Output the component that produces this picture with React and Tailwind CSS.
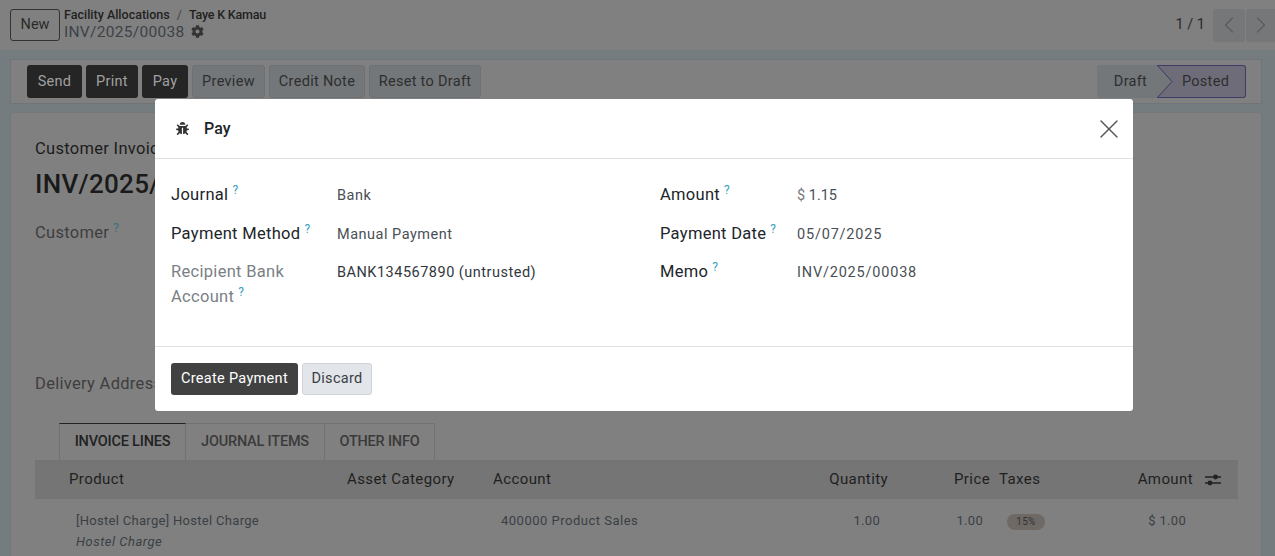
import React from "react";
import { X, ChevronLeft, ChevronRight } from "lucide-react";
import { FaCog, FaBug } from "react-icons/fa";

const Help = ({ className = "" }) => (
  <sup className={"ml-[4px] text-[12px] leading-none text-[#3a9fc0] " + className}>?</sup>
);

const Dark = ({ children, w }) => (
  <button className={"h-[33px] rounded-[3px] bg-[#252525] text-[14.5px] tracking-[0.3px] text-[#a0a0a0] " + w}>{children}</button>
);
const Light = ({ children, w }) => (
  <button className={"h-[33px] rounded-[3px] border border-[#6d7173] bg-[#73777a] text-[14.5px] tracking-[0.3px] text-[#2e2e2e] " + w}>{children}</button>
);

const Field = ({ label, children, muted, h = "h-[39px]", w = "w-[166px]" }) => (
  <div className={"flex items-start " + h}>
    <div className={"shrink-0 text-[16.5px] leading-[25px] tracking-[0.3px] " + w + " " + (muted ? "text-[#7a7f85]" : "text-[#212529]")}>{label}</div>
    <div className="pt-[1px] text-[14.5px] leading-[25px] tracking-[0.5px] text-[#4a4f55]">{children}</div>
  </div>
);

export default function App() {
  return (
    <div className="relative h-[556px] w-[1275px] overflow-hidden bg-[#747c80] font-['Roboto',sans-serif]">
      <header className="flex h-[51px] items-center border-b border-[#767a7c] bg-[#808080] pl-[10px] pr-0">
        <button className="h-[32px] w-[50px] rounded-[3px] border border-[#333] text-[14.5px] text-[#2a2a2a]">New</button>
        <div className="-mt-[2px] ml-[4px] flex flex-col">
          <div className="flex text-[12.5px] font-medium leading-[15px] text-[#222]">
            <span>Facility Allocations</span>
            <span className="mx-[7px] font-normal text-[#444]">/</span>
            <span className="tracking-[-0.2px]">Taye K Kamau</span>
          </div>
          <div className="flex items-center gap-[6px] text-[15.5px] leading-[20px] tracking-[0.3px] text-[#3c4248]">
            INV/2025/00038
            <FaCog size={13} className="text-[#333]" />
          </div>
        </div>
        <div className="ml-auto flex items-center">
          <span className="mr-[8px] text-[14.5px] text-[#2a2a2a]">1 / 1</span>
          <div className="flex h-[33px] w-[32px] items-center justify-center rounded-[3px] bg-[#757779]"><ChevronLeft size={28} strokeWidth={1} className="text-[#5c5c5c]" /></div>
          <div className="ml-[1px] flex h-[33px] w-[29px] items-center justify-center rounded-l-[3px] bg-[#757779]"><ChevronRight size={28} strokeWidth={1} className="text-[#5c5c5c]" /></div>
        </div>
      </header>

      <div className="mx-[10px] mt-[8px] flex h-[45px] w-[1252px] items-center border border-[#6f7579] bg-[#808080] pl-[16px] pr-[15px]">
        <div className="flex gap-[4px]">
          <Dark w="w-[55px]">Send</Dark>
          <Dark w="w-[52px]">Print</Dark>
          <Dark w="w-[46px]">Pay</Dark>
          <Light w="w-[73px]">Preview</Light>
          <Light w="w-[96px]">Credit Note</Light>
          <Light w="w-[112px]">Reset to Draft</Light>
        </div>
        <div className="relative ml-auto flex h-[33px] w-[149px] text-[14.5px] tracking-[0.3px] text-[#2e2e2e]">
          <div className="flex w-[61px] items-center justify-center rounded-l-[3px] bg-[#73777a] pl-[6px]">Draft</div>
          <div className="flex w-[88px] items-center justify-center rounded-r-[3px] border border-l-0 border-[#3f3a66] bg-[#6e6c78] pl-[8px]">Posted</div>
          <svg className="absolute left-[60px] top-0" width="16" height="33" viewBox="0 0 16 33">
            <path d="M0 0 L15 16.5 L0 33 Z" fill="#73777a" stroke="none" />
            <path d="M0 0 L15 16.5 L0 33" fill="none" stroke="#3f3a66" strokeWidth="1" />
          </svg>
        </div>
      </div>

      <main className="mx-[10px] mt-[8px] h-[460px] w-[1252px] rounded-t-[3px] border border-[#74787a] bg-[#808080] pl-[24px] pr-[23px] pt-[25px]">
        <div className="whitespace-nowrap text-[16.5px] leading-[22px] tracking-[0.3px] text-[#1c1c1c]">Customer Invoice</div>
        <div className="mt-[7px] text-[26px] font-medium leading-[34px] tracking-[0.3px] text-[#1a1a1a]">INV/2025/00038</div>
        <div className="mt-[20px] text-[16.5px] leading-[24px] tracking-[0.3px] text-[#3e3e3e]">Customer<Help className="!text-[#3f6f80]" /></div>
        <div className="mt-[127px] text-[16.5px] leading-[24px] tracking-[0.3px] text-[#3e3e3e]">Delivery Address</div>

        <div className="ml-[24px] mt-[27px] flex h-[37px] text-[14.5px] font-medium tracking-[-0.2px]">
          <div className="flex w-[127px] items-center justify-center border border-b-0 border-[#6f7173] border-t-[#222] text-[#222]">INVOICE LINES</div>
          <div className="flex w-[139px] items-center justify-center border-r border-t border-[#6f7173] text-[#3a3a3a]">JOURNAL ITEMS</div>
          <div className="flex w-[110px] items-center justify-center border-r border-t border-[#6f7173] text-[#3a3a3a]">OTHER INFO</div>
        </div>

        <div className="grid h-[39px] grid-cols-[312px_146px_270px_125px_102px_110px_93px_45px] items-center border-y border-[#737373] bg-[#757575] text-[15px] tracking-[0.4px] text-[#1f1f1f]">
          <div className="pl-[34px]">Product</div>
          <div>Asset Category</div>
          <div>Account</div>
          <div className="text-right">Quantity</div>
          <div className="text-right">Price</div>
          <div className="pl-[9px]">Taxes</div>
          <div className="text-right">Amount</div>
          <div className="flex justify-center pl-[1px] pr-[6px]">
            <svg width="16" height="14" viewBox="0 0 16 14" className="text-[#222]">
              <path d="M0 4 H16 M0 10 H16" stroke="currentColor" strokeWidth="1.3" />
              <circle cx="10.5" cy="4" r="2.4" fill="currentColor" />
              <circle cx="5" cy="10" r="2.4" fill="currentColor" />
            </svg>
          </div>
        </div>
        <div className="grid grid-cols-[312px_146px_270px_125px_102px_110px_93px_45px] pt-[11px] text-[13px] leading-[21px] tracking-[0.3px] text-[#3a3f44]">
          <div className="pl-[41px]">
            <div>[Hostel Charge] Hostel Charge</div>
            <div className="italic tracking-[0.5px]">Hostel Charge</div>
          </div>
          <div />
          <div className="whitespace-nowrap pl-[8px] tracking-[0.5px]">400000 Product Sales</div>
          <div className="pr-[8px] text-right">1.00</div>
          <div className="pr-[7px] text-right">1.00</div>
          <div className="pl-[17px]">
            <span className="inline-flex h-[16px] w-[38px] items-center justify-center rounded-full bg-[#6f6966] text-[10px] leading-none text-[#333]">15%</span>
          </div>
          <div className="pr-[7px] text-right">$ 1.00</div>
        </div>
      </main>

      <div className="absolute left-[155px] top-[99px] flex h-[312px] w-[978px] flex-col rounded-[3px] bg-white">
        <div className="flex h-[60px] shrink-0 items-center border-b border-[#dee2e6] pl-[21px] pr-[8px]">
          <FaBug size={13} className="text-[#333]" />
          <span className="ml-[15px] text-[16px] font-medium text-[#212529]">Pay</span>
          <X size={32} strokeWidth={1} className="ml-auto text-[#555]" />
        </div>
        <div className="grid flex-1 grid-cols-[489px_1fr] pl-[16px] pt-[23px]">
          <div>
            <Field label={<>Journal<Help /></>}>Bank</Field>
            <Field h="h-[38px]" label={<>Payment Method<Help /></>}>Manual Payment</Field>
            <Field muted h="h-[50px]" label={<>Recipient Bank<br />Account<Help /></>}><span className="text-[#33383d]">BANK134567890 (untrusted)</span></Field>
          </div>
          <div>
            <Field w="w-[137px]" label={<>Amount<Help /></>}><span className="tracking-normal"><span className="text-[#777]">$</span> 1.15</span></Field>
            <Field h="h-[38px]" w="w-[137px]" label={<>Payment Date<Help /></>}><span className="tracking-[0.8px]">05/07/2025</span></Field>
            <Field w="w-[137px]" label={<>Memo<Help /></>}><span className="tracking-[0.8px]">INV/2025/00038</span></Field>
          </div>
        </div>
        <div className="flex h-[65px] shrink-0 items-start gap-[4px] border-t border-[#dee2e6] pl-[16px] pt-[16px]">
          <button className="h-[32px] w-[127px] rounded-[3px] bg-[#414141] text-[14.5px] tracking-[0.3px] text-white">Create Payment</button>
          <button className="h-[32px] w-[70px] rounded-[3px] border border-[#ced4da] bg-[#e2e5ea] text-[14.5px] tracking-[0.3px] text-[#3a3f44]">Discard</button>
        </div>
      </div>
    </div>
  );
}
